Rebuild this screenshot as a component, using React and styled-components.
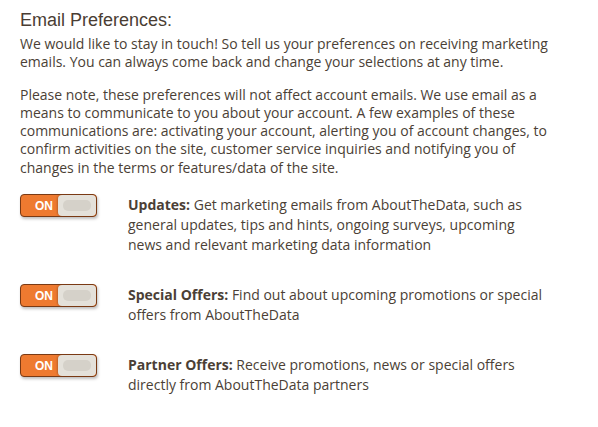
import React from 'react'
import styled, { createGlobalStyle } from 'styled-components'

const GlobalStyle = createGlobalStyle`
body {
  margin: 0;
  background: #ffffff;
  font-family: "Open Sans", sans-serif;
  color: #4b3f36;
}
`

const Wrapper = styled.div`
  padding: 8px 20px 20px 20px;
  width: 533px;
`

const Title = styled.h2`
  margin: 0 0 3px 0;
  font-family: "Liberation Sans", Arial, sans-serif;
  font-weight: normal;
  font-size: 18px;
  line-height: 24px;
  color: #4a3d33;
`

const P = styled.p`
  margin: 0 0 14px 0;
  font-size: 14px;
  line-height: 18.3px;
`

const Options = styled.div`
  display: flex;
  flex-direction: column;
  gap: 29px;
  margin-top: 17px;
`

const Row = styled.div`
  display: flex;
  align-items: flex-start;
`

const Toggle = styled.div`
  flex: none;
  display: flex;
  align-items: center;
  width: 77px;
  height: 23px;
  box-sizing: border-box;
  border: 1px solid #7a3a14;
  border-radius: 4px;
  background: #ee7a30;
  box-shadow: 1px 2px 3px rgba(0, 0, 0, 0.25);
  overflow: hidden;
`

const ToggleLabel = styled.span`
  width: 37px;
  box-sizing: border-box;
  padding-left: 14px;
  font-family: "Liberation Sans", Arial, sans-serif;
  font-weight: bold;
  font-size: 12px;
  color: #ffffff;
`

const Knob = styled.span`
  flex: 1;
  align-self: stretch;
  display: flex;
  align-items: center;
  justify-content: center;
  background: #e4e1da;
  border-radius: 4px;
  box-shadow: -1px 0 2px rgba(0, 0, 0, 0.2);

  &::after {
    content: '';
    width: 28px;
    height: 11px;
    border-radius: 5px;
    background: #d5d1c9;
  }
`

const OptionText = styled.div`
  margin-left: 31px;
  padding-top: 1px;
  font-size: 14px;
  line-height: 20px;
  width: 418px;
`

const Strong = styled.strong`
  font-weight: bold;
`

const options = [
  {
    name: 'Updates:',
    text: 'Get marketing emails from AboutTheData, such as general updates, tips and hints, ongoing surveys, upcoming news and relevant marketing data information'
  },
  {
    name: 'Special Offers:',
    text: 'Find out about upcoming promotions or special offers from AboutTheData'
  },
  {
    name: 'Partner Offers:',
    text: 'Receive promotions, news or special offers directly from AboutTheData partners'
  }
]

export default function App() {
  return (
    <Wrapper>
      <GlobalStyle />
      <Title>Email Preferences:</Title>
      <P>We would like to stay in touch! So tell us your preferences on receiving marketing emails. You can always come back and change your selections at any time.</P>
      <P>Please note, these preferences will not affect account emails. We use email as a means to communicate to you about your account. A few examples of these communications are: activating your account, alerting you of account changes, to confirm activities on the site, customer service inquiries and notifying you of changes in the terms or features/data of the site.</P>
      <Options>
        {options.map((o) => (
          <Row key={o.name}>
            <Toggle>
              <ToggleLabel>ON</ToggleLabel>
              <Knob />
            </Toggle>
            <OptionText><Strong>{o.name}</Strong> {o.text}</OptionText>
          </Row>
        ))}
      </Options>
    </Wrapper>
  )
}
